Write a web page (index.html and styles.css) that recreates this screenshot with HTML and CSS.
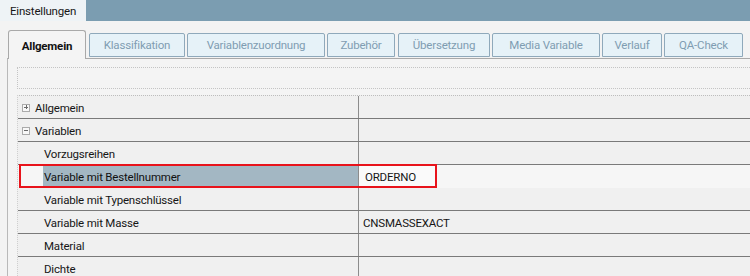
FILE: index.html
```html
<!DOCTYPE html>
<html>
<head>
<meta charset="utf-8">
<link rel="stylesheet" href="styles.css">
</head>
<body>
<div class="topbar">
  <div class="title-tab">Einstellungen</div>
</div>
<div class="tabs">
  <div class="tab active">Allgemein</div>
  <div class="tab w-klass">Klassifikation</div>
  <div class="tab w-varz">Variablenzuordnung</div>
  <div class="tab w-zub">Zubehör</div>
  <div class="tab w-ueb">Übersetzung</div>
  <div class="tab w-media">Media Variable</div>
  <div class="tab w-verl">Verlauf</div>
  <div class="tab w-qa">QA-Check</div>
</div>
<div class="panel">
  <div class="field"></div>
  <div class="grid">
    <div class="row">
      <div class="name"><span class="box plus"></span>Allgemein</div>
      <div class="value"></div>
    </div>
    <div class="row">
      <div class="name"><span class="box minus"></span>Variablen</div>
      <div class="value"></div>
    </div>
    <div class="row">
      <div class="name child">Vorzugsreihen</div>
      <div class="value"></div>
    </div>
    <div class="row selected">
      <div class="name child"><span class="hl">Variable mit Bestellnummer</span></div>
      <div class="value"><span class="val-cell">ORDERNO</span></div>
      <div class="redbox"></div>
    </div>
    <div class="row">
      <div class="name child">Variable mit Typenschlüssel</div>
      <div class="value"></div>
    </div>
    <div class="row">
      <div class="name child">Variable mit Masse</div>
      <div class="value">CNSMASSEXACT</div>
    </div>
    <div class="row">
      <div class="name child">Material</div>
      <div class="value"></div>
    </div>
    <div class="row">
      <div class="name child">Dichte</div>
      <div class="value"></div>
    </div>
  </div>
</div>
</body>
</html>
```
FILE: styles.css
```css
html, body {
  margin: 0;
  padding: 0;
}
body {
  width: 750px;
  height: 276px;
  overflow: hidden;
  background: #f3f3f3;
  font-family: Roboto, "Open Sans", "Liberation Sans", sans-serif;
  font-size: 11.5px;
  letter-spacing: -0.2px;
  color: #161616;
}
.topbar {
  height: 21px;
  background: #7b9db1;
  display: flex;
}
.title-tab {
  width: 76px;
  padding-left: 10px;
  background: #eef3f6;
  line-height: 23px;
  color: #161616;
}
.tabs {
  margin-top: 9px;
  padding-left: 8px;
  height: 28px;
  display: flex;
  align-items: flex-end;
  gap: 2px;
  position: relative;
  z-index: 1;
}
.tab {
  box-sizing: border-box;
  height: 24px;
  margin-bottom: 1px;
  border: 1px solid #8fa9bb;
  border-radius: 2px 2px 0 0;
  background: #e6f2f8;
  color: #7f9db2;
  display: flex;
  align-items: center;
  justify-content: center;
}
.tab.active {
  width: 78px;
  height: 29px;
  margin-bottom: -1px;
  margin-right: 1px;
  border: 1px solid #a9a9a9;
  border-bottom: none;
  border-radius: 3px 3px 0 0;
  background: #f4f4f4;
  color: #111;
  font-weight: 700;
  padding-top: 1px;
}
.w-klass { width: 96px; }
.w-varz { width: 138px; }
.w-zub { width: 68px; margin-right: 1px; }
.w-ueb { width: 92px; }
.w-media { width: 108px; }
.w-verl { width: 60px; }
.w-qa { width: 79px; }
.panel {
  margin-left: 7px;
  border-top: 1px solid #a9a9a9;
  border-left: 1px solid #b9b9b9;
  padding: 8px 0 0 9px;
  background: #f4f4f4;
}
.field {
  box-sizing: border-box;
  height: 22px;
  border: 1px dotted #c4c4c4;
  border-right: none;
  background: #f4f4f4;
}
.grid {
  margin-top: 6px;
  border-top: 1px dotted #bdbdbd;
  border-left: 1px dotted #cfcfcf;
  background: #f0f0f0;
}
.row {
  box-sizing: border-box;
  height: 23px;
  display: flex;
  border-bottom: 1px solid #7a7a7a;
  position: relative;
}
.name {
  width: 341px;
  flex: none;
  border-right: 1px solid #8c8c8c;
  display: flex;
  align-items: center;
  padding-left: 4px;
  padding-top: 1px;
  box-sizing: border-box;
}
.name.child {
  padding-left: 26px;
}
.value {
  flex: 1;
  display: flex;
  align-items: center;
  padding-left: 4px;
  padding-top: 1px;
}
.box {
  box-sizing: border-box;
  width: 8px;
  height: 8px;
  border: 1px solid #ababab;
  background: #f8f8f8;
  margin-right: 5px;
  position: relative;
}
.box::before {
  content: "";
  position: absolute;
  left: 1px;
  top: 2px;
  width: 4px;
  height: 1px;
  background: #6a6a6a;
}
.box.plus::after {
  content: "";
  position: absolute;
  left: 2.5px;
  top: 0.5px;
  width: 1px;
  height: 4px;
  background: #6a6a6a;
}
.selected {
  background: #f6f6f6;
  border-bottom-color: #f6f6f6;
}
.selected .name {
  padding-left: 25px;
  padding-top: 0;
  align-items: stretch;
}
.selected .hl {
  flex: 1;
  background: #a3b7c3;
  display: flex;
  align-items: center;
  padding-left: 1px;
  padding-top: 1px;
  color: #111;
}
.selected .value {
  padding-left: 0;
  padding-top: 0;
  align-items: stretch;
}
.val-cell {
  width: 72px;
  padding-left: 6px;
  padding-top: 1px;
  background: #fafafa;
  display: flex;
  align-items: center;
}
.redbox {
  position: absolute;
  left: 1px;
  top: -1px;
  width: 418px;
  height: 24px;
  box-sizing: border-box;
  border: 2px solid #e8131b;
  pointer-events: none;
}
```
